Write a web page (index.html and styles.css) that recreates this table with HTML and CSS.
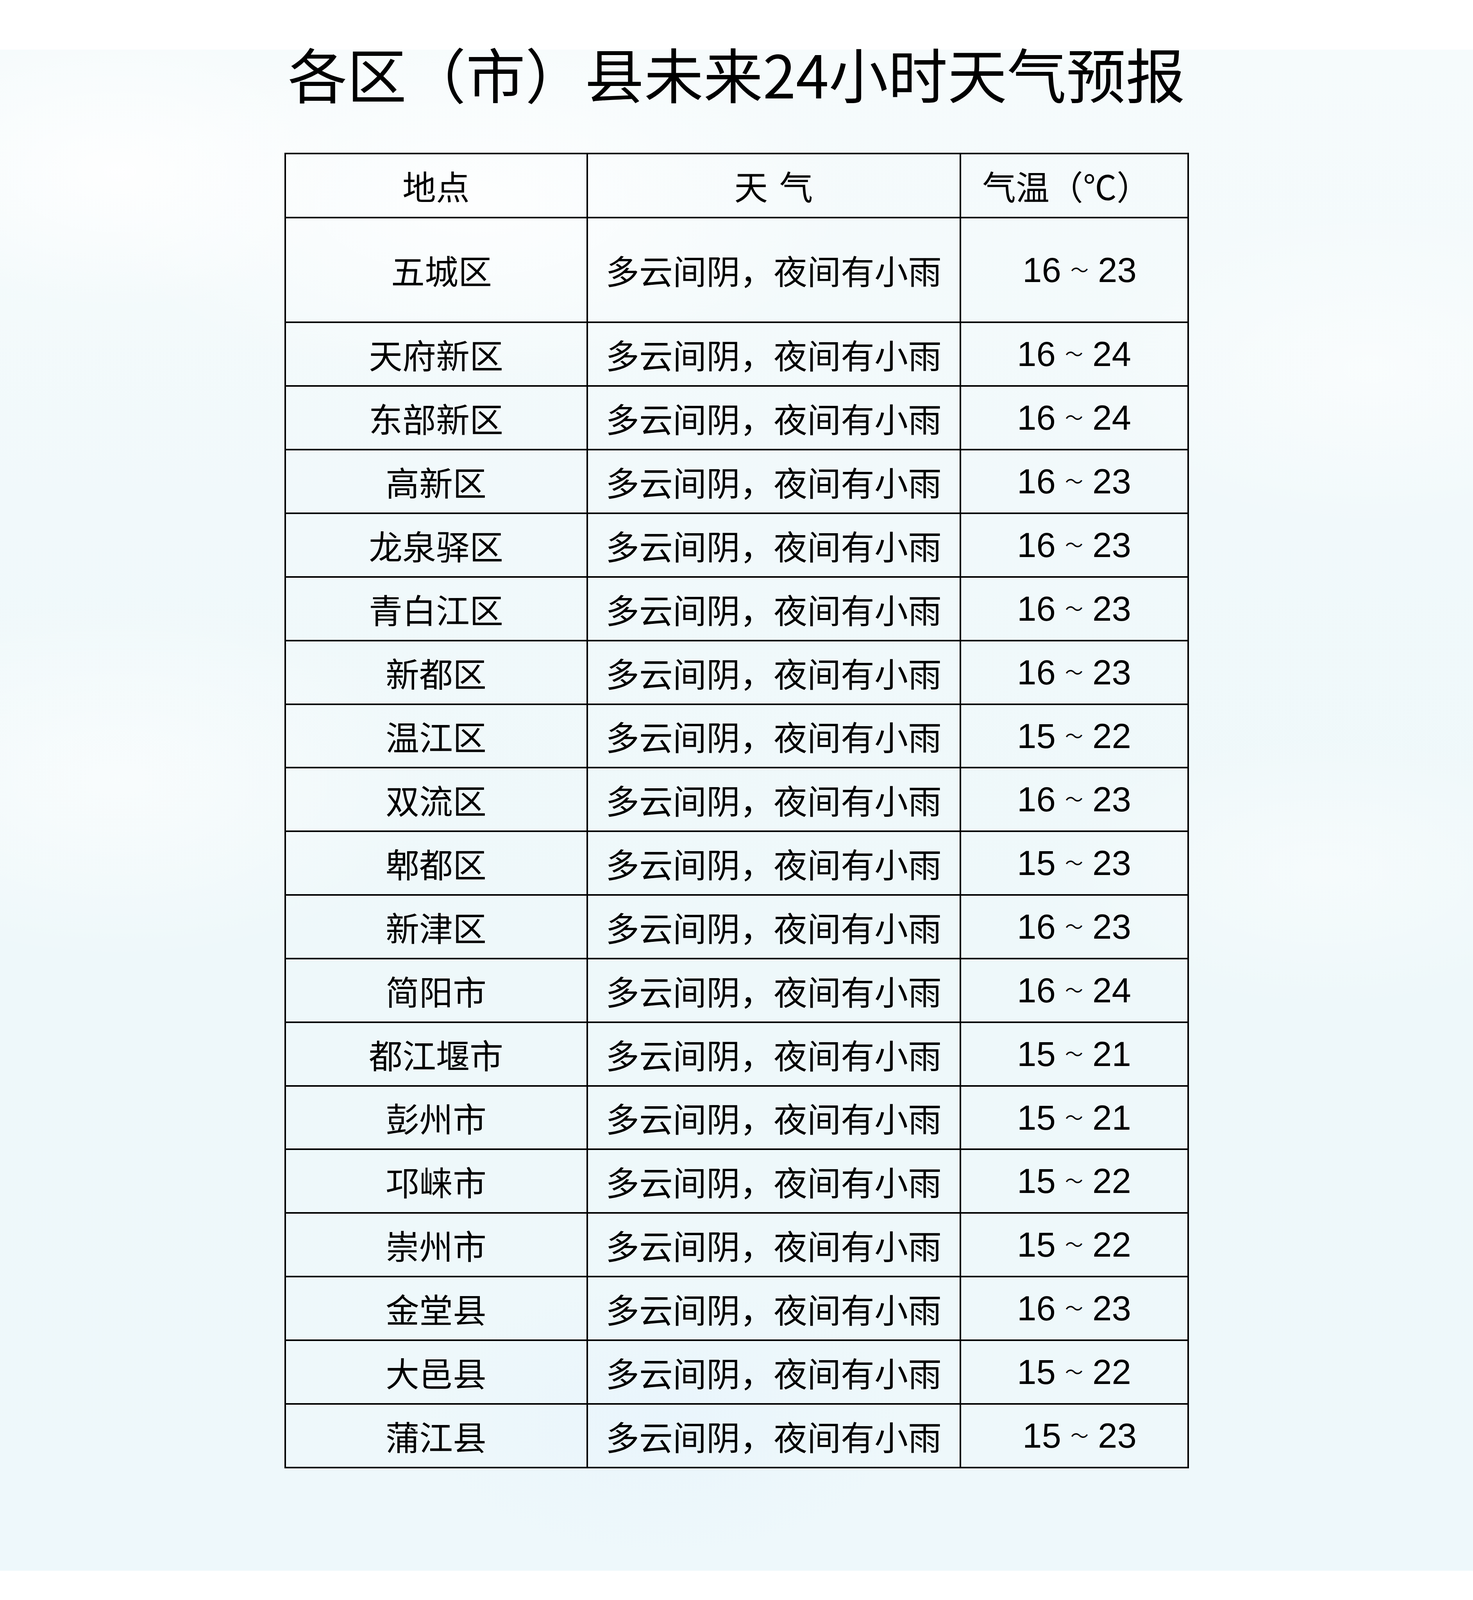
FILE: index.html
```html
<!DOCTYPE html>
<html lang="zh-CN">
<head>
<meta charset="utf-8">
<title>各区（市）县未来24小时天气预报</title>
<link rel="stylesheet" href="styles.css">
</head>
<body>
<div class="top-band"></div>
<main class="sheet">
  <header class="masthead">
    <h1 class="title">各区（市）县未来24小时天气预报</h1>
  </header>
  <table class="forecast">
    <colgroup>
      <col class="c-place">
      <col class="c-weather">
      <col class="c-temp">
    </colgroup>
    <thead>
      <tr class="head-row"><th>地点</th><th>天 气</th><th class="temp-head">气温（℃）</th></tr>
    </thead>
    <tbody>
      <tr class="tall-row"><td class="shift">五城区</td><td>多云间阴，夜间有小雨</td><td class="temp shift">16<span class="tilde">～</span>23</td></tr>
      <tr><td>天府新区</td><td>多云间阴，夜间有小雨</td><td class="temp">16<span class="tilde">～</span>24</td></tr>
      <tr><td>东部新区</td><td>多云间阴，夜间有小雨</td><td class="temp">16<span class="tilde">～</span>24</td></tr>
      <tr><td>高新区</td><td>多云间阴，夜间有小雨</td><td class="temp">16<span class="tilde">～</span>23</td></tr>
      <tr><td>龙泉驿区</td><td>多云间阴，夜间有小雨</td><td class="temp">16<span class="tilde">～</span>23</td></tr>
      <tr><td>青白江区</td><td>多云间阴，夜间有小雨</td><td class="temp">16<span class="tilde">～</span>23</td></tr>
      <tr><td>新都区</td><td>多云间阴，夜间有小雨</td><td class="temp">16<span class="tilde">～</span>23</td></tr>
      <tr><td>温江区</td><td>多云间阴，夜间有小雨</td><td class="temp">15<span class="tilde">～</span>22</td></tr>
      <tr><td>双流区</td><td>多云间阴，夜间有小雨</td><td class="temp">16<span class="tilde">～</span>23</td></tr>
      <tr><td>郫都区</td><td>多云间阴，夜间有小雨</td><td class="temp">15<span class="tilde">～</span>23</td></tr>
      <tr><td>新津区</td><td>多云间阴，夜间有小雨</td><td class="temp">16<span class="tilde">～</span>23</td></tr>
      <tr><td>简阳市</td><td>多云间阴，夜间有小雨</td><td class="temp">16<span class="tilde">～</span>24</td></tr>
      <tr><td>都江堰市</td><td>多云间阴，夜间有小雨</td><td class="temp">15<span class="tilde">～</span>21</td></tr>
      <tr><td>彭州市</td><td>多云间阴，夜间有小雨</td><td class="temp">15<span class="tilde">～</span>21</td></tr>
      <tr><td>邛崃市</td><td>多云间阴，夜间有小雨</td><td class="temp">15<span class="tilde">～</span>22</td></tr>
      <tr><td>崇州市</td><td>多云间阴，夜间有小雨</td><td class="temp">15<span class="tilde">～</span>22</td></tr>
      <tr><td>金堂县</td><td>多云间阴，夜间有小雨</td><td class="temp">16<span class="tilde">～</span>23</td></tr>
      <tr><td>大邑县</td><td>多云间阴，夜间有小雨</td><td class="temp">15<span class="tilde">～</span>22</td></tr>
      <tr><td>蒲江县</td><td>多云间阴，夜间有小雨</td><td class="temp shift">15<span class="tilde">～</span>23</td></tr>
    </tbody>
  </table>
</main>
<div class="bottom-band"></div>
</body>
</html>
```

FILE: styles.css
```css
html, body {
  margin: 0;
  padding: 0;
  background: #ffffff;
}

body {
  width: 3770px;
  height: 100vh;
  overflow: hidden;
  font-family: "Noto Sans CJK SC", "Noto Sans", sans-serif;
  color: #000000;
}

/* vertical metrics are expressed as fractions of the window height
   (reference: 5332px tall), horizontal metrics in px (3770px wide) */
.top-band {
  height: 3.0945vh;
  background: #ffffff;
}

.bottom-band {
  height: 1.838vh;
  background: #ffffff;
}

.sheet {
  box-sizing: border-box;
  height: calc(100vh - 3.0945vh - 1.838vh);
  display: flex;
  flex-direction: column;
  align-items: center;
  background:
    radial-gradient(ellipse 24% 13% at 8% 8%, rgba(255,255,255,0.9), rgba(255,255,255,0) 70%),
    radial-gradient(ellipse 37% 17% at 32% 10%, rgba(255,255,255,0.85), rgba(255,255,255,0) 70%),
    radial-gradient(ellipse 29% 15% at 93% 21%, rgba(255,255,255,0.55), rgba(255,255,255,0) 70%),
    radial-gradient(ellipse 32% 17% at 8% 48%, rgba(255,255,255,0.6), rgba(255,255,255,0) 70%),
    radial-gradient(ellipse 27% 13% at 90% 54%, rgba(255,255,255,0.45), rgba(255,255,255,0) 70%),
    radial-gradient(ellipse 24% 13% at 45% 90%, rgba(232,244,252,0.8), rgba(232,244,252,0) 70%),
    linear-gradient(180deg, #f6fbfc 0%, #f1f9fb 30%, #eef8fa 60%, #eef8fb 100%);
}

.masthead {
  height: 6.4516vh;
  display: flex;
  flex-direction: column;
  align-items: center;
}

.title {
  margin: calc(1.66vh - 84.5px) 0 0;
  font-size: 152px;
  line-height: 152px;
  font-weight: 400;
  letter-spacing: 0;
  white-space: nowrap;
}

.forecast {
  border-collapse: collapse;
  table-layout: fixed;
  width: 2311px;
  font-size: 86px;
  line-height: 1.2;
  font-weight: 400;
}

.c-place { width: 773px; }
.c-weather { width: 955px; }
.c-temp { width: 583px; }

.forecast th,
.forecast td {
  border: 4px solid #000000;
  padding: 0;
  text-align: center;
  vertical-align: middle;
  font-weight: 400;
  white-space: nowrap;
}

.forecast tr {
  height: 3.976vh;
}

.forecast .head-row {
  height: 3.9947vh;
}

.forecast .tall-row {
  height: 6.5641vh;
}

.forecast th {
  word-spacing: 10px;
}

.forecast .temp-head {
  padding-right: 40px;
}

.forecast .temp {
  font-family: "Liberation Sans", Arial, "Noto Sans CJK SC", sans-serif;
  font-size: 89px;
}

.forecast .tilde {
  font-family: "Noto Sans CJK SC", sans-serif;
  font-size: 46px;
  display: inline-block;
  margin: 0 24px;
  vertical-align: 14px;
  line-height: 1;
}

.forecast .shift {
  padding-left: 28px;
}
```
